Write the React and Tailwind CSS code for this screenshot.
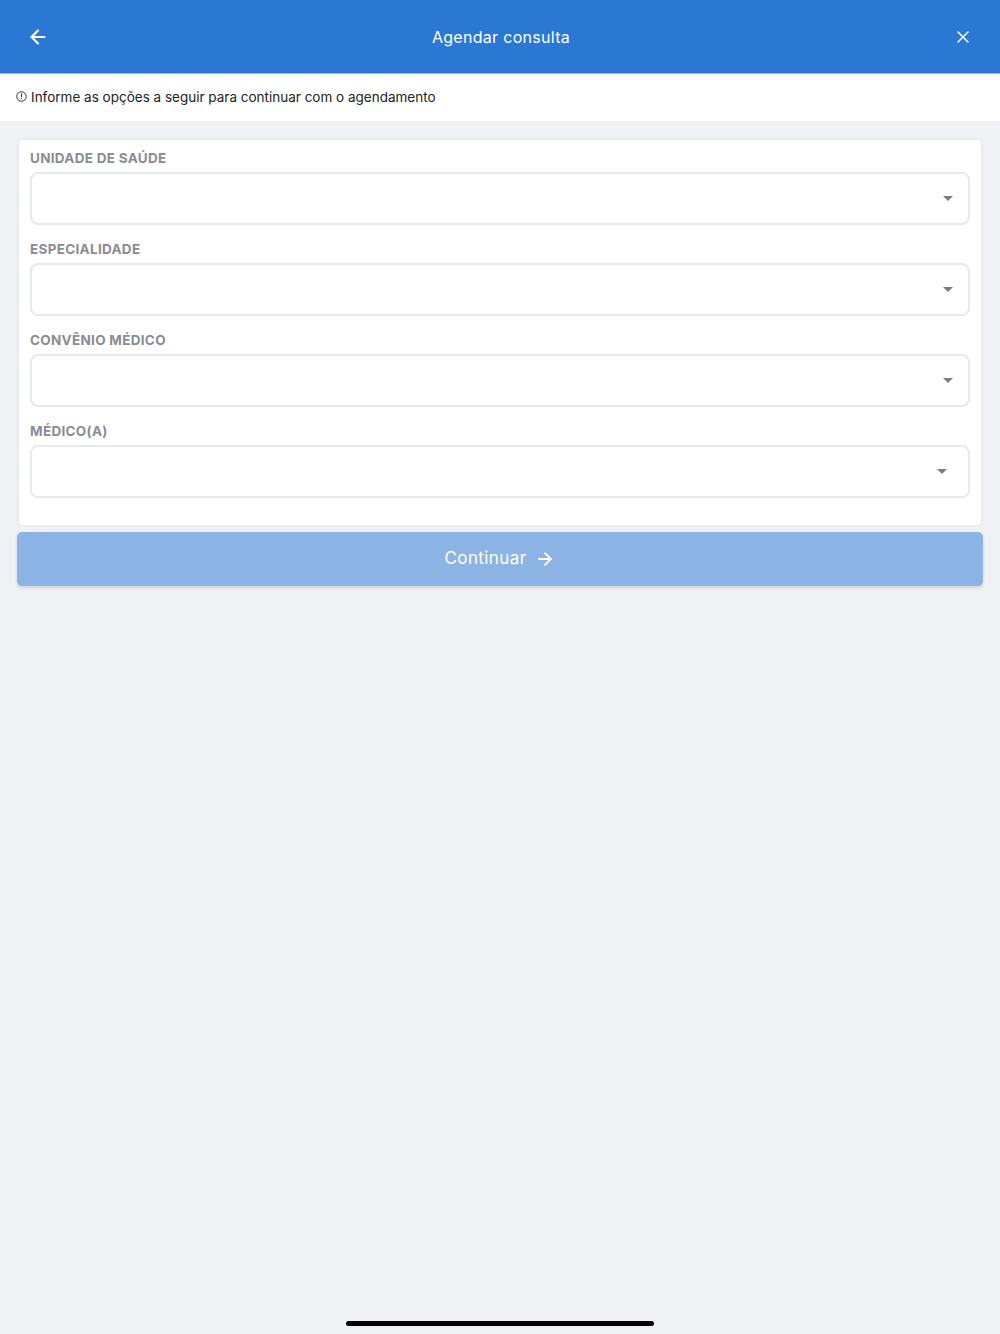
import { ArrowLeft, X, ArrowRight } from "lucide-react";

const fields = [
  { label: "UNIDADE DE SAÚDE", arrowPad: "pr-[15px]" },
  { label: "ESPECIALIDADE", arrowPad: "pr-[15px]" },
  { label: "CONVÊNIO MÉDICO", arrowPad: "pr-[15px]" },
  { label: "MÉDICO(A)", arrowPad: "pr-[21px]" },
];

function SelectField({ label, arrowPad }) {
  return (
    <div>
      <label className="block text-[13.5px] font-bold text-[#8b8b93] tracking-[0.3px] leading-[16px] mb-[6px]">
        {label}
      </label>
      <div
        className={`h-[53px] rounded-[8px] border-2 border-[#e6e9ee] bg-white flex items-center justify-end ${arrowPad}`}
      >
        <span className="block w-0 h-0 border-l-[5px] border-r-[5px] border-t-[5px] border-l-transparent border-r-transparent border-t-[#7d7d7d]" />
      </div>
    </div>
  );
}

export default function App() {
  return (
    <div className="min-h-[1334px] bg-[#f0f1f5] flex flex-col font-['Inter',sans-serif]">
      {/* Header */}
      <div className="h-[74px] bg-[#2a78d4] flex items-center justify-between px-[27px] border-b border-[#8fb6e6]">
        <ArrowLeft size={22} strokeWidth={2.3} className="text-white" />
        <h1 className="text-white text-[16px] tracking-[0.3px]">Agendar consulta</h1>
        <X size={20} strokeWidth={1.8} className="text-white" />
      </div>

      {/* Info */}
      <div className="h-[47px] bg-white flex items-center px-[16px] gap-[4px] text-[13.5px] text-[#222]">
        <svg width="11" height="11" viewBox="0 0 12 12" className="mb-[3px]">
          <circle cx="6" cy="6" r="5.2" fill="none" stroke="#222" strokeWidth="1" />
          <rect x="5.5" y="2.6" width="1" height="4.2" fill="#222" />
          <rect x="5.5" y="7.8" width="1" height="1.2" fill="#222" />
        </svg>
        <span>Informe as opções a seguir para continuar com o agendamento</span>
      </div>

      {/* Form */}
      <div className="px-[17px] pt-[17px]">
        <div className="bg-white border-2 border-[#e9ebef] rounded-[6px] px-[11px] pt-[10px] pb-[27px] flex flex-col gap-[16px]">
          {fields.map((f) => (
            <SelectField key={f.label} {...f} />
          ))}
        </div>

        <button
          type="button"
          className="mt-[5px] w-full h-[54px] rounded-[5px] bg-[#8bb3e3] text-white text-[17px] tracking-[0.4px] flex items-center justify-center gap-[9px] shadow-[0_2px_3px_rgba(0,0,0,0.12)]"
        >
          Continuar
          <ArrowRight size={20} strokeWidth={2.2} />
        </button>
      </div>

      <div className="flex-1" />

      {/* Home indicator */}
      <div className="flex justify-center pb-[8px]">
        <div className="w-[308px] h-[5px] rounded-full bg-black" />
      </div>
    </div>
  );
}
